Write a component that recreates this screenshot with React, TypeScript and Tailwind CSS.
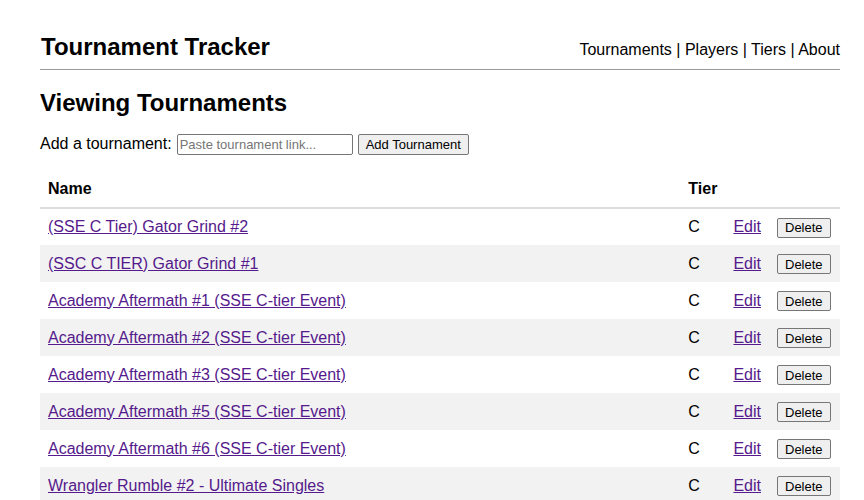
import React from 'react';

const tournaments = [
  '(SSE C Tier) Gator Grind #2',
  '(SSC C TIER) Gator Grind #1',
  'Academy Aftermath #1 (SSE C-tier Event)',
  'Academy Aftermath #2 (SSE C-tier Event)',
  'Academy Aftermath #3 (SSE C-tier Event)',
  'Academy Aftermath #5 (SSE C-tier Event)',
  'Academy Aftermath #6 (SSE C-tier Event)',
  'Wrangler Rumble #2 - Ultimate Singles',
];

const btn =
  'border border-[#767676] rounded-[2px] bg-[#efefef] text-[13px] leading-[15px] px-[7px] text-black';

export default function App() {
  return (
    <div className="min-h-screen bg-white text-black font-['Liberation_Sans',Arial,sans-serif]">
      <div className="w-[800px] ml-[40px]">
        {/* Header */}
        <div className="flex items-end justify-between pt-[33px] pb-[8px] border-b border-[#999]">
          <h1 className="text-[24px] leading-[28px] font-bold pl-px">Tournament Tracker</h1>
          <nav className="text-[16px] leading-[18px] mb-[2px]">
            <a href="#">Tournaments</a> | <a href="#">Players</a> | <a href="#">Tiers</a> | <a href="#">About</a>
          </nav>
        </div>

        <h2 className="text-[24px] leading-[28px] font-bold mt-[19px]">Viewing Tournaments</h2>

        <div className="flex items-center mt-[15px] text-[16px]">
          <span>Add a tournament:</span>
          <input
            className="ml-[5px] w-[176px] h-[21px] border border-[#767676] rounded-[2px] px-[2px] text-[13px] placeholder:text-[#757575]"
            placeholder="Paste tournament link..."
          />
          <button className={`${btn} ml-[5px] h-[21px]`}>Add Tournament</button>
        </div>

        {/* Table */}
        <table className="w-full mt-[14px] border-collapse text-[16px]">
          <thead>
            <tr className="border-b-2 border-[#ddd] h-[38px]">
              <th className="text-left px-2 font-bold">Name</th>
              <th className="text-left px-2 font-bold w-[44px]">Tier</th>
              <th className="w-[43px]"></th>
              <th className="w-[71px]"></th>
            </tr>
          </thead>
          <tbody>
            {tournaments.map((name, i) => (
              <tr key={name} className={`h-[37px] ${i % 2 === 1 ? 'bg-[#f2f2f2]' : 'bg-white'}`}>
                <td className="px-2">
                  <a href="#" className="text-[#551a8b] underline">{name}</a>
                </td>
                <td className="px-2">C</td>
                <td className="px-2">
                  <a href="#" className="text-[#551a8b] underline">Edit</a>
                </td>
                <td className="px-2">
                  <button className={`${btn} h-[20px]`}>Delete</button>
                </td>
              </tr>
            ))}
          </tbody>
        </table>
      </div>
    </div>
  );
}
